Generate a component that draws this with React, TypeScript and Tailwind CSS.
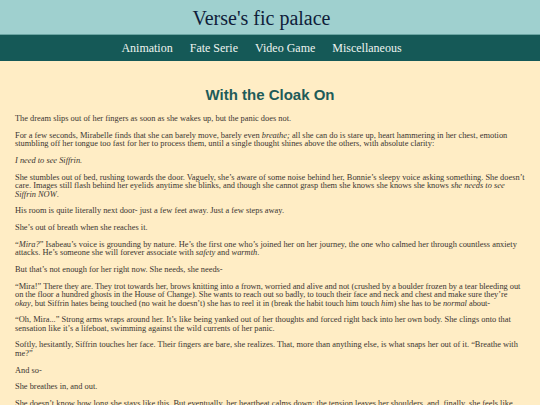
import React from "react";

export default function App() {
  const serif = { fontFamily: '"Liberation Serif", "Times New Roman", serif' };
  return (
    <div className="min-h-[405px] bg-[#ffedc5]" style={serif}>
      <header className="h-[35px] bg-[#9fd0cf] border-b border-[#6aa5a3] flex items-center justify-center pr-[17px]">
        <h1 className="text-[20px] leading-none text-[#0f1d3a] mt-[1px]">Verse's fic palace</h1>
      </header>
      <nav className="h-[26px] bg-[#155957] flex items-center justify-center gap-[17px] pr-[17px] text-[12px] text-[#eef4f0]">
        <span>Animation</span>
        <span>Fate Serie</span>
        <span>Video Game</span>
        <span>Miscellaneous</span>
      </nav>
      <main className="px-[15px] pt-[25px] text-[8.4px] leading-[8.5px] text-[#3a3531]">
        <h2
          className="text-center text-[15px] leading-[18px] font-bold text-[#1e5c59] mb-[11px]"
          style={{ fontFamily: '"Liberation Sans", Arial, sans-serif' }}
        >
          With the Cloak On
        </h2>
        <div className="flex flex-col gap-[8.2px]">
          <p>The dream slips out of her fingers as soon as she wakes up, but the panic does not.</p>
          <p>
            For a few seconds, Mirabelle finds that she can barely move, barely even <i>breathe;</i> all she can do is stare up, heart hammering in her chest, emotion stumbling off her tongue too fast for her to process them, until a single thought shines above the others, with absolute clarity:
          </p>
          <p><i>I need to see Siffrin.</i></p>
          <p>
            She stumbles out of bed, rushing towards the door. Vaguely, she’s aware of some noise behind her, Bonnie’s sleepy voice asking something. She doesn’t care. Images still flash behind her eyelids anytime she blinks, and though she cannot grasp them she knows she knows she knows <i>she needs to see Siffrin NOW</i>.
          </p>
          <p>His room is quite literally next door- just a few feet away. Just a few steps away.</p>
          <p>She’s out of breath when she reaches it.</p>
          <p>
            “<i>Mira?</i>” Isabeau’s voice is grounding by nature. He’s the first one who’s joined her on her journey, the one who calmed her through countless anxiety attacks. He’s someone she will forever associate with <i>safety</i> and <i>warmth</i>.
          </p>
          <p>But that’s not enough for her right now. She needs, she needs-</p>
          <p className="tracking-[-0.04px]">
            “Mira!” There they are. They trot towards her, brows knitting into a frown, worried and alive and not (crushed by a boulder frozen by a tear bleeding out on the floor a hundred ghosts in the House of Change). She wants to reach out so badly, to touch their face and neck and chest and make sure they’re <i>okay</i>, but Siffrin hates being touched (no wait he doesn’t) she has to reel it in (break the habit touch him touch <i>him</i>) she has to be <i>normal</i> about-
          </p>
          <p>
            “Oh, Mira...” Strong arms wraps around her. It’s like being yanked out of her thoughts and forced right back into her own body. She clings onto that sensation like it’s a lifeboat, swimming against the wild currents of her panic.
          </p>
          <p>
            Softly, hesitantly, Siffrin touches her face. Their fingers are bare, she realizes. That, more than anything else, is what snaps her out of it. “Breathe with me?”
          </p>
          <p>And so-</p>
          <p>She breathes in, and out.</p>
          <p>
            She doesn’t know how long she stays like this. But eventually, her heartbeat calms down; the tension leaves her shoulders, and, finally, she feels like she can breathe again.
          </p>
        </div>
      </main>
    </div>
  );
}
